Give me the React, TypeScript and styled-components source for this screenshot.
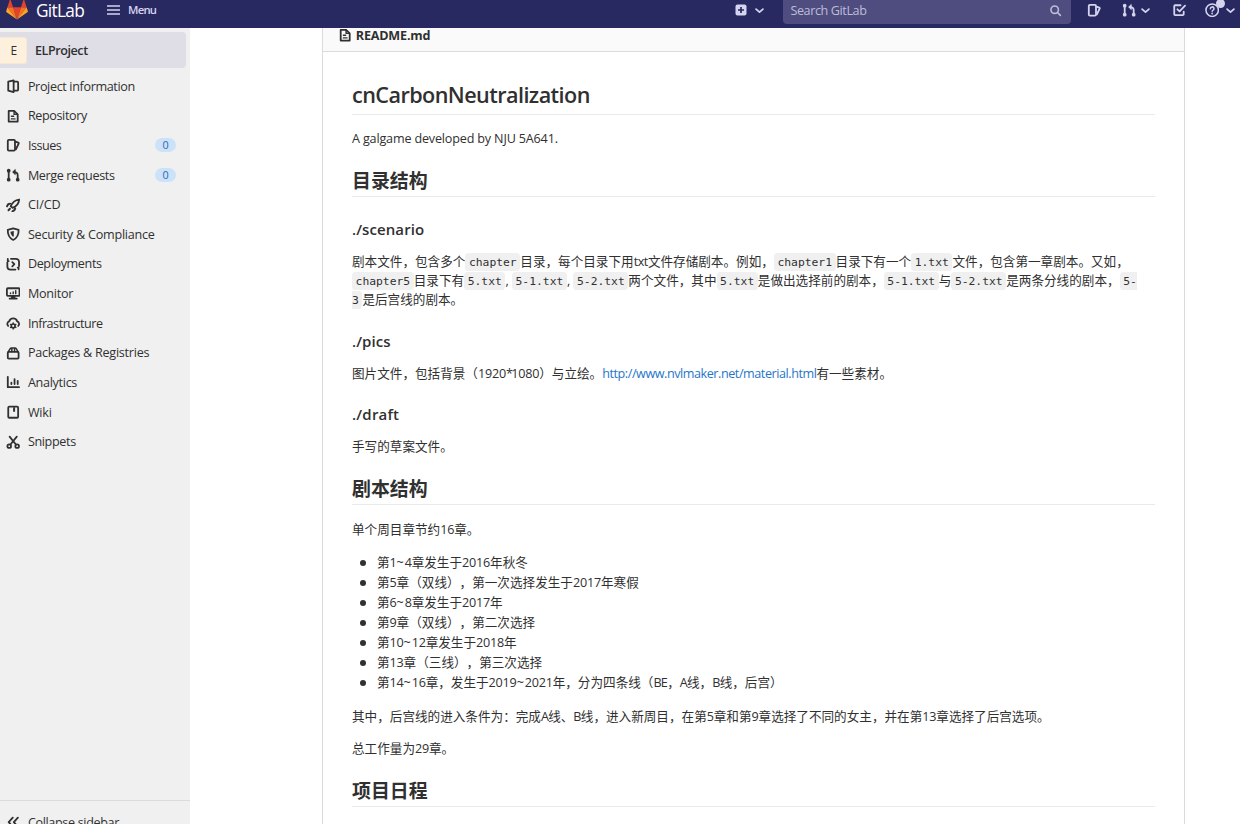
import React from "react";
import styled, { createGlobalStyle } from "styled-components";

const GlobalStyle = createGlobalStyle`
  * { box-sizing: border-box; }
  html, body { margin: 0; padding: 0; background: #fff; overflow: hidden; }
  body {
    font-family: "Open Sans", "Noto Sans CJK SC", sans-serif;
    font-size: 12.6px;
    color: #303030;
    text-spacing-trim: space-all;
  }
`;

const Page = styled.div`
  display: flex;
  flex-direction: column;
  width: 1240px;
  height: 824px;
  overflow: hidden;
`;

/* ---------- top bar ---------- */

const TopBar = styled.header`
  display: flex;
  align-items: flex-start;
  height: 28px;
  flex: none;
  padding-right: 4px;
  overflow: hidden;
  background: #292961;
  color: #d5d4ef;
`;

const Slot = styled.span<{ $left?: number; $top?: number }>`
  display: block;
  flex: none;
  line-height: 0;
  margin-left: ${(p) => p.$left ?? 0}px;
  margin-top: ${(p) => p.$top ?? 0}px;
  svg { display: block; }
`;

const Wordmark = styled.span`
  width: 49px;
  margin-left: 8px;
  font-size: 17.3px;
  line-height: 21px;
  letter-spacing: -0.7px;
  color: #fff;
  white-space: nowrap;
`;

const MenuLabel = styled.span`
  width: 32px;
  margin-left: 8px;
  font-size: 11.3px;
  font-weight: 600;
  line-height: 20px;
  letter-spacing: -0.75px;
`;

const Spacer = styled.span`
  flex: 1;
`;

const Search = styled.div`
  display: flex;
  justify-content: space-between;
  width: 288px;
  height: 24px;
  margin-left: 18px;
  padding: 0 9px 0 7px;
  border-radius: 0 0 4px 4px;
  background: #4f4d80;
  color: #bdbcd9;
  line-height: 21px;
  letter-spacing: -0.4px;
`;

const HelpWrap = styled.span`
  position: relative;
  flex: none;
  margin: 3px 0 0 18px;
  line-height: 0;
`;

const Dot = styled.i`
  position: absolute;
  left: 11px;
  top: -4px;
  width: 9px;
  height: 9px;
  border-radius: 50%;
  background: #d5d4ef;
`;

/* ---------- sidebar ---------- */

const Body = styled.div`
  display: flex;
  flex: 1;
  min-height: 0;
`;

const Sidebar = styled.aside`
  display: flex;
  flex-direction: column;
  flex: none;
  width: 190px;
  padding-top: 4px;
  background: #f0f0f0;
`;

const ProjectRow = styled.div`
  display: flex;
  align-items: center;
  width: 186px;
  height: 36px;
  margin-bottom: 3.4px;
  border-radius: 0 4px 4px 0;
  background: #dfdee6;
  font-weight: 600;
  letter-spacing: -0.45px;
`;

const Avatar = styled.span`
  width: 27px;
  height: 27px;
  margin-right: 8px;
  padding-left: 1px;
  border: 1px solid #f6e8d2;
  border-left: 0;
  border-radius: 0 3px 3px 0;
  background: #fdf1dd;
  font-size: 12px;
  font-weight: 400;
  line-height: 25px;
  text-align: center;
`;

const NavRow = styled.div`
  display: flex;
  align-items: center;
  height: 29.63px;
  padding: 0 14px 0 6px;
`;

const NavLabel = styled.span<{ $ls: number }>`
  flex: 1;
  margin-left: 7.5px;
  white-space: nowrap;
  letter-spacing: ${(p) => p.$ls}px;
`;

const Count = styled.span`
  width: 21px;
  height: 14px;
  border-radius: 7px;
  background: #cbe2f9;
  color: #2f68b4;
  font-size: 10.8px;
  line-height: 14px;
  text-align: center;
`;

const Collapse = styled.div`
  display: flex;
  align-items: center;
  height: 24px;
  margin-top: auto;
  padding: 19px 0 0 6px;
  border-top: 1px solid #dbdbdb;
`;

/* ---------- readme ---------- */

const Main = styled.main`
  display: flex;
  flex: 1;
  padding-left: 132px;
`;

const Card = styled.article`
  width: 863px;
  border: 1px solid #dbdbdb;
  border-width: 0 1px;
`;

const FileBar = styled.div`
  display: flex;
  align-items: flex-start;
  height: 24px;
  padding-left: 15px;
  border-bottom: 1px solid #dbdbdb;
  background: #fafafa;
`;

const FileName = styled.b`
  margin-left: 3.4px;
  line-height: 15px;
  font-weight: 700;
  letter-spacing: -0.2px;
`;

const Content = styled.div`
  padding: 28px 29px 0;
`;

const H1 = styled.h1`
  margin: 0;
  padding-bottom: 5px;
  border-bottom: 1px solid #eaeaea;
  font-size: 21.6px;
  font-weight: 600;
  line-height: 29px;
  letter-spacing: -0.56px;
`;

const H2 = styled.h2`
  margin: 21px 0 0;
  padding-bottom: 3px;
  border-bottom: 1px solid #eaeaea;
  font-size: 18.9px;
  font-weight: 700;
  line-height: 24px;
`;

const H3 = styled.h3<{ $top?: number; $ls?: number }>`
  margin: ${(p) => p.$top ?? 22}px 0 0;
  font-size: 15px;
  font-weight: 600;
  line-height: 20px;
  letter-spacing: ${(p) => p.$ls ?? 0.08}px;
`;

const P = styled.p<{ $top?: number }>`
  margin: ${(p) => p.$top ?? 13}px 0 0;
  line-height: 19px;
`;

const Code = styled.code`
  padding: 1.8px 3.6px;
  border-radius: 3.6px;
  background: #f0f0f0;
  font-family: "DejaVu Sans Mono", monospace;
  font-size: 11.34px;
  line-height: 1;
`;

const Link = styled.a`
  color: #1f75cb;
`;

const Latin = styled.span<{ $ls?: number }>`
  letter-spacing: ${(p) => p.$ls ?? -0.44}px;
`;

const List = styled.ul`
  margin: 14px 0 0;
  padding-left: 8px;
  line-height: 20px;
  list-style: none;
`;

const Item = styled.li`
  display: flex;
  align-items: center;
  height: 20px;

  &::before {
    content: "";
    width: 6px;
    height: 6px;
    margin-right: 11px;
    border-radius: 50%;
    background: #303030;
  }
`;

const spacing = (run: string) => {
  if (/\d/.test(run)) return -0.2;
  if (run === "~") return 0.8;
  if (run === "*") return -1.7;
  return -0.7;
};

/* Sets the tracking of the digits and letters that sit between Chinese characters. */
const Mixed = ({ text }: { text: string }) => (
  <>
    {text.split(/(\d+|[A-Za-z]+|[~*])/).map((run, i) =>
      i % 2 ? <Latin key={i} $ls={spacing(run)}>{run}</Latin> : run,
    )}
  </>
);

/* ---------- icons ---------- */

const Icon = ({ size = 14.4, children }: { size?: number; children: React.ReactNode }) => (
  <svg
    width={size}
    height={size}
    viewBox="0 0 16 16"
    fill="none"
    stroke="currentColor"
    strokeWidth="2"
    strokeLinecap="round"
    strokeLinejoin="round"
  >
    {children}
  </svg>
);

const icons = {
  project: (
    <>
      <path d="M2.500 3L8.500 1.500v13L2.500 13z" />
      <path d="M9 3h3.500a1 1 0 0 1 1 1v8a1 1 0 0 1-1 1H9" />
    </>
  ),
  doc: (
    <>
      <path d="M3 14V2h6l4 4v8z" />
      <path d="M6 8h2.5M6 11h4M9 2.5V6h3.5" strokeWidth="1.6" />
    </>
  ),
  issues: (
    <>
      <rect x="2" y="2" width="8" height="12" rx="1.2" />
      <path d="M10.5 4l3.1 1.1a.9.9 0 0 1 .5 1.2L11 12.5" />
    </>
  ),
  merge: (
    <>
      <path d="M3 4v9M13 12V8q0-3.5-4-3.5" />
      <circle cx="3" cy="3" r="1.1" fill="currentColor" />
      <circle cx="3" cy="13" r="1.1" fill="currentColor" />
      <circle cx="13" cy="13" r="1.1" fill="currentColor" />
      <path d="M10 2L7.4 4.5 10 7z" fill="currentColor" strokeWidth="1" />
    </>
  ),
  rocket: (
    <>
      <path d="M5.200 9.200C7 4.800 10.300 2.200 14.600 1.700 14.300 5.800 11.600 9.200 7.400 11z" />
      <path d="M4.600 6.300L2.400 7 1.200 9.200M10.200 11.600l-.8 2-2.200 1.200M4.300 12l-1.500 1.600" strokeWidth="2.200" />
    </>
  ),
  shield: (
    <>
      <path d="M8 1.600l6 1.600c.3 5.500-1.600 9-6 11.200C3.600 12.200 1.700 8.700 2 3.200z" />
      <path d="M8 4.600v6.200C6 9.300 5 7.600 4.900 5.300z" fill="currentColor" stroke="none" />
      <path d="M8 5v5" strokeWidth="1.2" />
    </>
  ),
  deploy: (
    <>
      <path d="M5.500 2h5.500a3.500 3.500 0 0 1 3.500 3.500V10M10.500 14H5a3.500 3.500 0 0 1-3.500-3.500V6M2 2.200v2.300h1M14 13.600v-1.800h-1" />
      <path d="M7 5.700L9.300 8 7 10.300" />
    </>
  ),
  monitor: (
    <>
      <rect x="1" y="2.500" width="14" height="8.500" rx="1" />
      <path d="M4 14h8" />
      <path d="M5 8.500v-.8M8 8.500V6.500M10.800 8.500V5.200" strokeWidth="1.6" />
      <path d="M8 11v3" strokeWidth="5" strokeLinecap="butt" />
    </>
  ),
  cloud: (
    <>
      <path d="M2.400 11A3 3 0 0 1 3.500 6a4.700 4.700 0 0 1 9 0 3 3 0 0 1 1.100 5" />
      <circle cx="8" cy="11" r="2.100" strokeWidth="1.800" />
      <path d="M8 7.600v1M8 13.400v1M5 9.300l.9.5M10.100 12.200l.9.5M5 12.700l.9-.5M10.100 9.800l.9-.5" strokeWidth="1.500" />
    </>
  ),
  package: (
    <>
      <rect x="2" y="6.500" width="12" height="7.500" rx="1" />
      <path d="M2.500 6.500l2-3.200Q5 2.300 6 2.300h4q1 0 1.500 1l2 3.200M6.500 6V3M9.500 6V3" strokeWidth="1.700" />
    </>
  ),
  chart: (
    <>
      <path d="M2 2v11.500h12.500" />
      <path d="M6 10V8.500M9.500 10V4.500M13 10V6.500" />
    </>
  ),
  book: (
    <>
      <rect x="2.500" y="1.800" width="11" height="12.400" rx="1.200" />
      <path d="M9 2.500V7.500" strokeWidth="2.200" strokeLinecap="butt" />
    </>
  ),
  scissors: (
    <>
      <path d="M4 1.800l6.800 8.500M12 1.800L5.200 10.300" />
      <circle cx="3.600" cy="12.400" r="2" />
      <circle cx="12.400" cy="12.400" r="2" />
    </>
  ),
  collapse: <path d="M7.500 3L3 8l4.500 5M13.200 3L8.700 8l4.500 5" />,
  chevron: <path d="M3 6L8 10.500 13 6" strokeWidth="2.500" />,
  search: (
    <>
      <circle cx="7" cy="7" r="4.600" />
      <path d="M10.500 10.500L14 14" />
    </>
  ),
  todo: (
    <>
      <path d="M9.500 2.500H3.500a1 1 0 0 0-1 1v9a1 1 0 0 0 1 1h8.500a1 1 0 0 0 1-1V9.500" />
      <path d="M6 7l2.400 2.400L14.500 3" />
    </>
  ),
  help: (
    <>
      <circle cx="8" cy="8" r="6.900" strokeWidth="1.700" />
      <path d="M6 6.300A2 2 0 1 1 8.700 8.200Q8 8.500 8 9.200" strokeWidth="1.700" />
      <circle cx="8" cy="11.600" r=".4" strokeWidth="1.300" />
    </>
  ),
};

type IconName = keyof typeof icons;

const Tanuki = () => (
  <svg width="22" height="22" viewBox="0 0 22 22">
    <path d="M11 20.500L15 8.200H7z" fill="#e24329" />
    <path d="M11 20.500L7 8.200H1.400zM11 20.500l4-12.300h5.600z" fill="#fc6d26" />
    <path d="M1.400 8.200L.2 12q-.2.800.4 1.200L11 20.500zM20.600 8.200l1.200 3.800q.2.800-.4 1.200L11 20.500z" fill="#fca326" />
    <path d="M1.400 8.200H7L4.600.8q-.4-.8-.8 0zM20.600 8.200H15L17.400.8q.4-.8.800 0z" fill="#e24329" />
  </svg>
);

const PlusSquare = () => (
  <svg width="12" height="12" viewBox="0 0 12 12">
    <rect x=".5" y=".5" width="11" height="11" rx="2" fill="#d5d4ef" />
    <path d="M6 3v6M3 6h6" stroke="#292961" strokeWidth="1.700" />
  </svg>
);

const Burger = () => (
  <svg width="13" height="10" viewBox="0 0 13 10">
    <path d="M0 1h13M0 5h13M0 9h13" stroke="#d5d4ef" strokeWidth="1.500" />
  </svg>
);

/* ---------- data ---------- */

const nav: { icon: IconName; label: string; ls: number; count?: number }[] = [
  { icon: "project", label: "Project information", ls: -0.36 },
  { icon: "doc", label: "Repository", ls: -0.38 },
  { icon: "issues", label: "Issues", ls: -0.5, count: 0 },
  { icon: "merge", label: "Merge requests", ls: -0.38, count: 0 },
  { icon: "rocket", label: "CI/CD", ls: -0.1 },
  { icon: "shield", label: "Security & Compliance", ls: -0.23 },
  { icon: "deploy", label: "Deployments", ls: -0.38 },
  { icon: "monitor", label: "Monitor", ls: -0.25 },
  { icon: "cloud", label: "Infrastructure", ls: -0.48 },
  { icon: "package", label: "Packages & Registries", ls: -0.25 },
  { icon: "chart", label: "Analytics", ls: -0.3 },
  { icon: "book", label: "Wiki", ls: -0.2 },
  { icon: "scissors", label: "Snippets", ls: -0.36 },
];

const chapters = [
  "第1~4章发生于2016年秋冬",
  "第5章（双线），第一次选择发生于2017年寒假",
  "第6~8章发生于2017年",
  "第9章（双线），第二次选择",
  "第10~12章发生于2018年",
  "第13章（三线），第三次选择",
  "第14~16章，发生于2019~2021年，分为四条线（BE，A线，B线，后宫）",
];

export default function App() {
  return (
    <Page>
      <GlobalStyle />
      <TopBar>
        <Slot $left={6} $top={-1}><Tanuki /></Slot>
        <Wordmark>GitLab</Wordmark>
        <Slot $left={22} $top={5}><Burger /></Slot>
        <MenuLabel>Menu</MenuLabel>
        <Spacer />
        <Slot $top={4}><PlusSquare /></Slot>
        <Slot $left={7} $top={5}><Icon size={11}>{icons.chevron}</Icon></Slot>
        <Search>
          <span>Search GitLab</span>
          <Slot $top={4}><Icon size={13}>{icons.search}</Icon></Slot>
        </Search>
        <Slot $left={16} $top={3}><Icon>{icons.issues}</Icon></Slot>
        <Slot $left={20} $top={3}><Icon>{icons.merge}</Icon></Slot>
        <Slot $left={4} $top={5}><Icon size={11}>{icons.chevron}</Icon></Slot>
        <Slot $left={21} $top={3}><Icon>{icons.todo}</Icon></Slot>
        <HelpWrap>
          <Icon>{icons.help}</Icon>
          <Dot />
        </HelpWrap>
        <Slot $left={6} $top={5}><Icon size={11}>{icons.chevron}</Icon></Slot>
      </TopBar>
      <Body>
        <Sidebar>
          <ProjectRow>
            <Avatar>E</Avatar>
            ELProject
          </ProjectRow>
          {nav.map((n) => (
            <NavRow key={n.label}>
              <Icon>{icons[n.icon]}</Icon>
              <NavLabel $ls={n.ls}>{n.label}</NavLabel>
              {n.count !== undefined && <Count>{n.count}</Count>}
            </NavRow>
          ))}
          <Collapse>
            <Icon>{icons.collapse}</Icon>
            <NavLabel $ls={-0.35}>Collapse sidebar</NavLabel>
          </Collapse>
        </Sidebar>
        <Main>
          <Card>
            <FileBar>
              <Icon>{icons.doc}</Icon>
              <FileName>README.md</FileName>
            </FileBar>
            <Content>
              <H1>cnCarbonNeutralization</H1>
              <P $top={14}><Latin $ls={-0.17}>A galgame developed by NJU 5A641.</Latin></P>
              <H2>目录结构</H2>
              <H3>./scenario</H3>
              <P>
                剧本文件，包含多个<Code>chapter</Code>目录，每个目录下用<Latin>txt</Latin>文件存储剧本。例如，
                <Code>chapter1</Code>目录下有一个<Code>1.txt</Code>文件，包含第一章剧本。又如，
                <br />
                <Code>chapter5</Code>目录下有<Code>5.txt</Code>, <Code>5-1.txt</Code>, <Code>5-2.txt</Code>
                两个文件，其中<Code>5.txt</Code>是做出选择前的剧本，<Code>5-1.txt</Code>与<Code>5-2.txt</Code>
                是两条分线的剧本，<Code>5-<br />3</Code>是后宫线的剧本。
              </P>
              <H3>./pics</H3>
              <P>
                <Mixed text="图片文件，包括背景（1920*1080）与立绘。" />
                <Link><Latin>http://www.nvlmaker.net/material.html</Latin></Link>有一些素材。
              </P>
              <H3 $top={21} $ls={0.2}>./draft</H3>
              <P>手写的草案文件。</P>
              <H2>剧本结构</H2>
              <P $top={15}><Mixed text="单个周目章节约16章。" /></P>
              <List>
                {chapters.map((c) => (
                  <Item key={c}>
                    <span><Mixed text={c} /></span>
                  </Item>
                ))}
              </List>
              <P $top={14}>
                <Mixed text="其中，后宫线的进入条件为：完成A线、B线，进入新周目，在第5章和第9章选择了不同的女主，并在第13章选择了后宫选项。" />
              </P>
              <P $top={13}><Mixed text="总工作量为29章。" /></P>
              <H2>项目日程</H2>
            </Content>
          </Card>
        </Main>
      </Body>
    </Page>
  );
}
